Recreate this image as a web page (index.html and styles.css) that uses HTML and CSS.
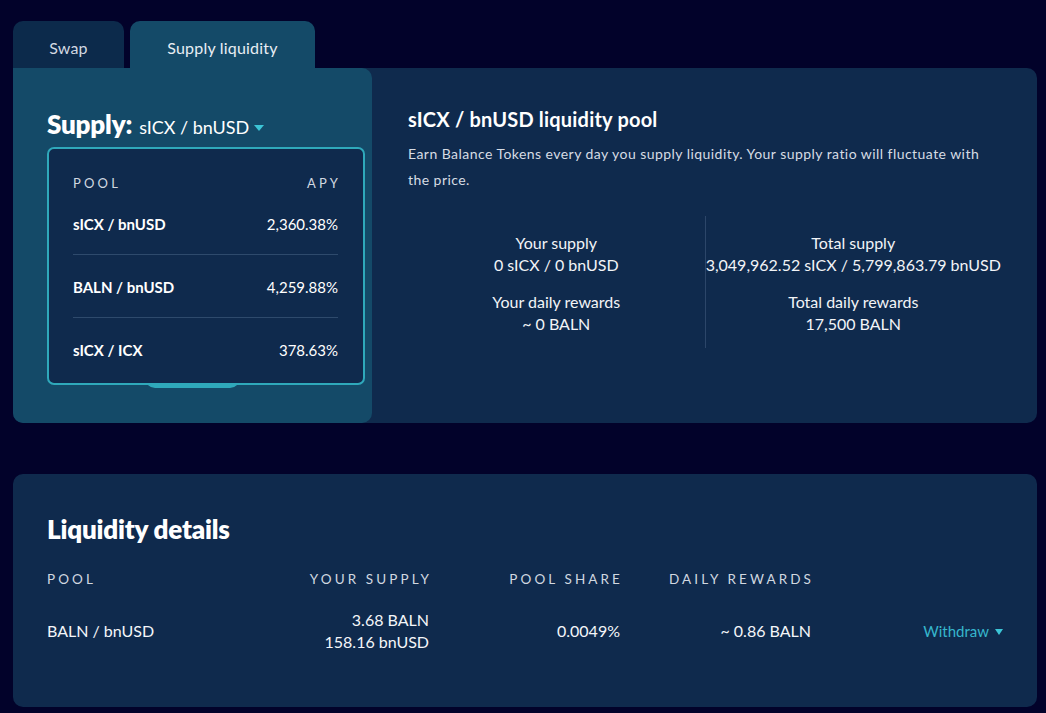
FILE: index.html
```html
<!DOCTYPE html>
<html lang="en">
<head>
<meta charset="utf-8">
<title>Supply liquidity</title>
<link rel="stylesheet" href="styles.css">
</head>
<body>
<div class="page">
  <div class="tabs">
    <div class="tab tab-swap">Swap</div>
    <div class="tab tab-active">Supply liquidity</div>
  </div>
  <section class="panel">
    <div class="supply">
      <h2 class="supply-title">Supply: <span class="pair">sICX / bnUSD</span><span class="caret"></span></h2>
      <div class="menu">
        <div class="menu-head"><span>POOL</span><span>APY</span></div>
        <div class="menu-row"><span class="menu-pair">sICX / bnUSD</span><span>2,360.38%</span></div>
        <div class="menu-row"><span class="menu-pair">BALN / bnUSD</span><span>4,259.88%</span></div>
        <div class="menu-row"><span class="menu-pair">sICX / ICX</span><span>378.63%</span></div>
      </div>
      <div class="supply-btn"></div>
    </div>
    <div class="info">
      <h3 class="info-title">sICX / bnUSD liquidity pool</h3>
      <p class="info-desc">Earn Balance Tokens every day you supply liquidity. Your supply ratio will fluctuate with the price.</p>
      <div class="stats">
        <div class="stat-col">
          <div class="stat"><div>Your supply</div><div>0 sICX / 0 bnUSD</div></div>
          <div class="stat"><div>Your daily rewards</div><div>~ 0 BALN</div></div>
        </div>
        <div class="stat-col stat-col-right">
          <div class="stat"><div>Total supply</div><div>3,049,962.52 sICX / 5,799,863.79 bnUSD</div></div>
          <div class="stat"><div>Total daily rewards</div><div>17,500 BALN</div></div>
        </div>
      </div>
    </div>
  </section>
  <section class="details">
    <h2 class="details-title">Liquidity details</h2>
    <div class="table">
      <div class="th c-pool">POOL</div>
      <div class="th c-num">YOUR SUPPLY</div>
      <div class="th c-num">POOL SHARE</div>
      <div class="th c-num">DAILY REWARDS</div>
      <div class="th"></div>
      <div class="td c-pool">BALN / bnUSD</div>
      <div class="td c-num">3.68 BALN<br>158.16 bnUSD</div>
      <div class="td c-num">0.0049%</div>
      <div class="td c-num">~ 0.86 BALN</div>
      <div class="td c-num"><span class="withdraw">Withdraw<span class="caret caret-small"></span></span></div>
    </div>
  </section>
</div>
</body>
</html>
```
FILE: styles.css
```css
* { box-sizing: border-box; }
html, body { margin: 0; padding: 0; }
body {
  background: #02022a;
  font-family: "Lato", "Liberation Sans", sans-serif;
  color: #ffffff;
  width: 1046px;
  height: 713px;
  overflow: hidden;
}
.page {
  padding: 21px 9px 0 13px;
}
.tabs {
  display: flex;
  gap: 6px;
}
.tab {
  height: 47px;
  border-radius: 10px 10px 0 0;
  display: flex;
  align-items: center;
  justify-content: center;
  padding-top: 5px;
  font-size: 16px;
  letter-spacing: 0.2px;
}
.tab-swap {
  width: 111px;
  background: #0c2a4b;
  color: #d3d9e2;
}
.tab-active {
  width: 185px;
  background: #144a68;
  color: #e8eef4;
}
.panel {
  display: flex;
  height: 355px;
  background: #0f2a4d;
  border-radius: 0 10px 10px 10px;
}
.supply {
  position: relative;
  width: 359px;
  flex: none;
  background: #144a68;
  border-radius: 0 10px 10px 10px;
  padding: 40px 0 0 34px;
  display: flex;
  flex-direction: column;
}
.supply-title {
  margin: 0;
  font-size: 26px;
  font-weight: 800;
  line-height: 32px;
  display: flex;
  align-items: baseline;
  letter-spacing: -0.2px;
}
.pair {
  font-size: 18px;
  font-weight: 400;
  margin-left: 7px;
  letter-spacing: 0;
}
.caret {
  display: inline-block;
  width: 0;
  height: 0;
  border-left: 5px solid transparent;
  border-right: 5px solid transparent;
  border-top: 6px solid #3cc5d6;
  margin-left: 5px;
  align-self: center;
  margin-top: 4px;
}
.caret-small {
  border-left-width: 4.5px;
  border-right-width: 4.5px;
  border-top-width: 6px;
  margin-left: 6px;
  vertical-align: 2px;
}
.menu {
  position: absolute;
  left: 34px;
  top: 79px;
  width: 318px;
  height: 238px;
  background: #0f2a4d;
  border: 2px solid #2fa9bb;
  border-radius: 7px;
  padding: 24px 25px 0 24px;
  z-index: 2;
}
.menu-head {
  display: flex;
  justify-content: space-between;
  font-size: 13px;
  letter-spacing: 3.2px;
  line-height: 20px;
  color: #d1d8e0;
}
.menu-head span:last-child { margin-right: -3px; }
.menu-row {
  display: flex;
  justify-content: space-between;
  font-size: 15px;
  line-height: 22px;
  padding: 20px 0 19px;
  border-bottom: 1px solid #2e4a6c;
}
.menu-row + .menu-row { padding-top: 21px; padding-bottom: 19px; }
.menu-row:last-child { border-bottom: none; }
.menu-pair { font-weight: 700; }
.supply-btn {
  margin-top: auto;
  margin-bottom: 35px;
  margin-left: 98px;
  width: 95px;
  height: 40px;
  background: #2fa9bb;
  border-radius: 10px;
}
.info {
  flex: 1;
  padding: 39px 36px 0 36px;
}
.info-title {
  margin: 0;
  font-size: 20px;
  font-weight: 700;
  line-height: 24px;
  letter-spacing: 0.2px;
}
.info-desc {
  margin: 10px 0 0;
  font-size: 14px;
  line-height: 26px;
  color: #d6dce4;
  max-width: 593px;
  letter-spacing: 0.45px;
}
.stats {
  margin-top: 23px;
  display: grid;
  grid-template-columns: 1fr 1fr;
}
.stat-col {
  display: flex;
  flex-direction: column;
  gap: 15px;
  padding: 16px 0 13px;
  text-align: center;
  font-size: 16px;
  line-height: 22px;
  color: #f2f4f7;
}
.stat-col-right {
  border-left: 1px solid #2c4669;
}
.details {
  margin-top: 51px;
  height: 233px;
  background: #0f2a4d;
  border-radius: 10px;
  padding: 40px 34px 0 34px;
}
.details-title {
  margin: 0;
  font-size: 26px;
  font-weight: 800;
  line-height: 30px;
  letter-spacing: -0.2px;
}
.table {
  margin-top: 25px;
  display: grid;
  grid-template-columns: 203px 179px 191px 191px 1fr;
  row-gap: 20px;
  align-items: center;
}
.th {
  font-size: 13.5px;
  letter-spacing: 3.1px;
  line-height: 20px;
  color: #d1d8e0;
}
.th.c-num { margin-right: -3px; }
.td {
  font-size: 16px;
  line-height: 22px;
  color: #f4f6f9;
}
.c-num { text-align: right; }
.withdraw {
  color: #36b6cc;
  font-size: 15px;
}
```
